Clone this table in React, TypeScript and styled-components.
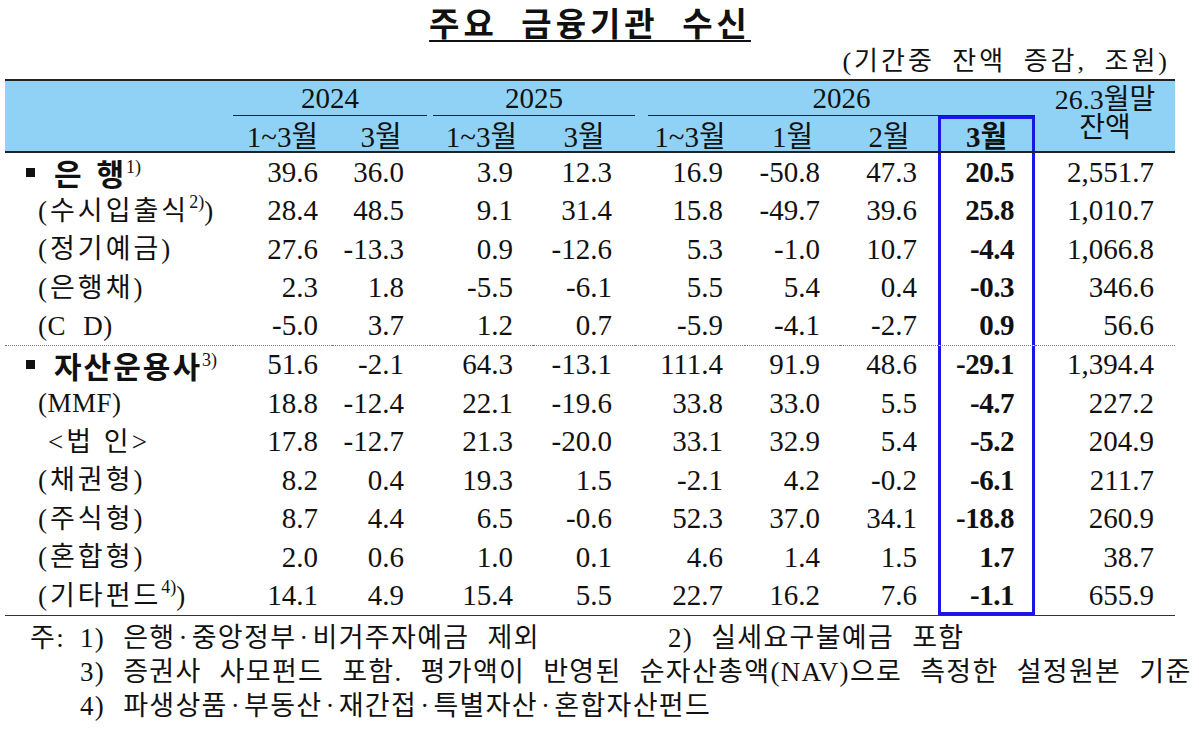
import React from 'react';
import styled, { createGlobalStyle } from 'styled-components';

const GlobalStyle = createGlobalStyle`
  html, body {
    margin: 0;
    padding: 0;
    background: #ffffff;
  }
  body {
    font-family: "Liberation Serif", "Noto Sans CJK KR", serif;
    color: #111111;
  }
`;

const COLS = '228px 99px 98px 103px 102px 110px 95px 98px 97px 140px';
const PADS = [14, 26, 20, 23, 22, 20, 21, 21, 21];
const BOX = '#1717e8';

const Page = styled.div`
  width: 1170px;
  margin-left: 5px;
`;

const Title = styled.h1`
  margin: 0;
  height: 44px;
  text-align: center;
  font-family: "Noto Sans CJK KR", sans-serif;
  font-weight: 700;
  font-size: 33px;
  line-height: 44px;
  letter-spacing: 4px;
  word-spacing: 12px;
  span {
    text-decoration: underline;
    text-decoration-thickness: 2px;
    text-underline-offset: 4px;
  }
`;

const Unit = styled.div`
  margin-top: 2px;
  height: 33px;
  padding-right: 5px;
  text-align: right;
  font-size: 26px;
  line-height: 32px;
  letter-spacing: 3px;
  word-spacing: 8px;
`;

const Head = styled.div`
  display: grid;
  grid-template-columns: ${COLS};
  grid-template-rows: 35px 35px;
  background: #8fd2f5;
  border-top: 2px solid #222;
  border-bottom: 2px solid #222;
  font-size: 29px;
`;

const Corner = styled.div`
  grid-column: 1;
  grid-row: 1 / span 2;
`;

const Year = styled.div<{ $col: number; $span: number; $ml: number; $mr: number }>`
  grid-column: ${(p) => p.$col} / span ${(p) => p.$span};
  grid-row: 1;
  margin: 0 ${(p) => p.$mr}px 0 ${(p) => p.$ml}px;
  border-bottom: 1.5px solid #222;
  display: flex;
  align-items: center;
  justify-content: center;
`;

const Balance = styled.div`
  grid-column: 10;
  grid-row: 1 / span 2;
  display: flex;
  flex-direction: column;
  align-items: center;
  justify-content: center;
  gap: 1px;
  padding-bottom: 6px;
  font-size: 28px;
  span {
    display: block;
    height: 27px;
    line-height: 27px;
  }
`;

const SubHead = styled.div<{ $col: number; $hl?: boolean }>`
  grid-column: ${(p) => p.$col};
  grid-row: 2;
  display: flex;
  align-items: center;
  justify-content: center;
  font-weight: ${(p) => (p.$hl ? 700 : 400)};
  box-shadow: ${(p) =>
    p.$hl ? `inset 3px 0 0 ${BOX}, inset -3px 0 0 ${BOX}, inset 0 3px 0 ${BOX}` : 'none'};
`;

const Body = styled.div`
  display: grid;
  grid-template-columns: ${COLS};
  grid-auto-rows: 38.5px;
  border-bottom: 1.5px solid #333;
`;

type Kind = 'head' | 'sub' | 'inner';

const Label = styled.div<{ $kind: Kind; $dot?: boolean }>`
  display: flex;
  align-items: center;
  padding-left: ${(p) => (p.$kind === 'head' ? 21 : p.$kind === 'inner' ? 43 : 33)}px;
  border-bottom: ${(p) => (p.$dot ? '1px dotted #777' : 'none')};
`;

const LabelText = styled.span<{ $kind: Kind; $latin?: boolean }>`
  font-size: ${(p) => (p.$kind === 'head' ? 30 : 27)}px;
  font-weight: ${(p) => (p.$kind === 'head' ? 700 : 400)};
  font-family: ${(p) =>
    p.$kind === 'head'
      ? '"Noto Sans CJK KR", sans-serif'
      : '"Liberation Serif", "Noto Sans CJK KR", serif'};
  letter-spacing: ${(p) => (p.$kind === 'head' ? 2 : p.$latin ? 0.5 : 3)}px;
  word-spacing: ${(p) => (p.$kind === 'head' ? 4 : p.$latin ? 10 : 0)}px;
  white-space: pre;
  line-height: 36px;
`;

const Bullet = styled.span`
  display: inline-block;
  width: 9px;
  height: 9px;
  background: #111;
  margin-right: 19px;
  flex: none;
`;

const Sup = styled.sup`
  font-family: "Liberation Serif", serif;
  font-weight: 400;
  font-size: 18px;
  letter-spacing: 0;
  vertical-align: 12px;
  line-height: 0;
`;

const Num = styled.div<{ $pad: number; $hl?: boolean; $last?: boolean; $dot?: boolean }>`
  display: flex;
  align-items: center;
  justify-content: flex-end;
  padding-right: ${(p) => p.$pad}px;
  font-size: 29px;
  font-weight: ${(p) => (p.$hl ? 700 : 400)};
  letter-spacing: ${(p) => (p.$hl ? '-0.5px' : '0')};
  border-bottom: ${(p) => (p.$dot ? '1px dotted #777' : 'none')};
  box-shadow: ${(p) =>
    p.$hl
      ? `inset 3px 0 0 ${BOX}, inset -3px 0 0 ${BOX}${p.$last ? `, inset 0 -3px 0 ${BOX}` : ''}`
      : 'none'};
`;

const Notes = styled.div`
  margin-top: 5px;
  padding-left: 25px;
  font-size: 27px;
  line-height: 34px;
  letter-spacing: 1.3px;
  word-spacing: 10px;
`;

const NoteRow = styled.div`
  display: grid;
  grid-template-columns: 50px 1fr;
`;

const NoteItems = styled.div`
  display: flex;
`;

const NoteItem = styled.span<{ $w?: number }>`
  width: ${(p) => (p.$w ? `${p.$w}px` : 'auto')};
  white-space: nowrap;
`;

const Dot = styled.span`
  margin: 0 3px;
`;

type Row = {
  kind: Kind;
  text: string;
  sup?: string;
  tail?: string;
  latin?: boolean;
  vals: string[];
};

const rows: Row[] = [
  { kind: 'head', text: '은 행', sup: '1)', vals: ['39.6', '36.0', '3.9', '12.3', '16.9', '-50.8', '47.3', '20.5', '2,551.7'] },
  { kind: 'sub', text: '(수시입출식', sup: '2)', tail: ')', vals: ['28.4', '48.5', '9.1', '31.4', '15.8', '-49.7', '39.6', '25.8', '1,010.7'] },
  { kind: 'sub', text: '(정기예금)', vals: ['27.6', '-13.3', '0.9', '-12.6', '5.3', '-1.0', '10.7', '-4.4', '1,066.8'] },
  { kind: 'sub', text: '(은행채)', vals: ['2.3', '1.8', '-5.5', '-6.1', '5.5', '5.4', '0.4', '-0.3', '346.6'] },
  { kind: 'sub', text: '(C D)', latin: true, vals: ['-5.0', '3.7', '1.2', '0.7', '-5.9', '-4.1', '-2.7', '0.9', '56.6'] },
  { kind: 'head', text: '자산운용사', sup: '3)', vals: ['51.6', '-2.1', '64.3', '-13.1', '111.4', '91.9', '48.6', '-29.1', '1,394.4'] },
  { kind: 'sub', text: '(MMF)', latin: true, vals: ['18.8', '-12.4', '22.1', '-19.6', '33.8', '33.0', '5.5', '-4.7', '227.2'] },
  { kind: 'inner', text: '<법 인>', vals: ['17.8', '-12.7', '21.3', '-20.0', '33.1', '32.9', '5.4', '-5.2', '204.9'] },
  { kind: 'sub', text: '(채권형)', vals: ['8.2', '0.4', '19.3', '1.5', '-2.1', '4.2', '-0.2', '-6.1', '211.7'] },
  { kind: 'sub', text: '(주식형)', vals: ['8.7', '4.4', '6.5', '-0.6', '52.3', '37.0', '34.1', '-18.8', '260.9'] },
  { kind: 'sub', text: '(혼합형)', vals: ['2.0', '0.6', '1.0', '0.1', '4.6', '1.4', '1.5', '1.7', '38.7'] },
  { kind: 'sub', text: '(기타펀드', sup: '4)', tail: ')', vals: ['14.1', '4.9', '15.4', '5.5', '22.7', '16.2', '7.6', '-1.1', '655.9'] },
];

const subHeads = ['1~3월', '3월', '1~3월', '3월', '1~3월', '1월', '2월', '3월'];

function Dotted({ parts }: { parts: string[] }) {
  return (
    <>
      {parts.map((p, i) => (
        <React.Fragment key={i}>
          {i > 0 && <Dot>·</Dot>}
          {p}
        </React.Fragment>
      ))}
    </>
  );
}

export default function App() {
  return (
    <Page>
      <GlobalStyle />
      <Title>
        <span>주요 금융기관 수신</span>
      </Title>
      <Unit>(기간중 잔액 증감, 조원)</Unit>

      <Head>
        <Corner />
        <Year $col={2} $span={2} $ml={0} $mr={3}>2024</Year>
        <Year $col={4} $span={2} $ml={3} $mr={0}>2025</Year>
        <Year $col={6} $span={4} $ml={13} $mr={0}>2026</Year>
        <Balance>
          <span>26.3월말</span>
          <span>잔액</span>
        </Balance>
        {subHeads.map((h, i) => (
          <SubHead key={i} $col={i + 2} $hl={i === 7}>
            {h}
          </SubHead>
        ))}
      </Head>

      <Body>
        {rows.map((r, ri) => {
          const dot = ri === 4;
          const last = ri === rows.length - 1;
          return (
            <React.Fragment key={ri}>
              <Label $kind={r.kind} $dot={dot}>
                {r.kind === 'head' && <Bullet />}
                <LabelText $kind={r.kind} $latin={r.latin}>
                  {r.text}
                  {r.sup && <Sup>{r.sup}</Sup>}
                  {r.tail}
                </LabelText>
              </Label>
              {r.vals.map((v, ci) => (
                <Num key={ci} $pad={PADS[ci]} $hl={ci === 7} $last={last} $dot={dot}>
                  {v}
                </Num>
              ))}
            </React.Fragment>
          );
        })}
      </Body>

      <Notes>
        <NoteRow>
          <span>주:</span>
          <NoteItems>
            <NoteItem $w={588}>
              1) <Dotted parts={['은행', '중앙정부', '비거주자예금']} /> 제외
            </NoteItem>
            <NoteItem>2) 실세요구불예금 포함</NoteItem>
          </NoteItems>
        </NoteRow>
        <NoteRow>
          <span />
          <NoteItem>3) 증권사 사모펀드 포함. 평가액이 반영된 순자산총액(NAV)으로 측정한 설정원본 기준</NoteItem>
        </NoteRow>
        <NoteRow>
          <span />
          <NoteItem>
            4) <Dotted parts={['파생상품', '부동산', '재간접', '특별자산', '혼합자산펀드']} />
          </NoteItem>
        </NoteRow>
      </Notes>
    </Page>
  );
}
